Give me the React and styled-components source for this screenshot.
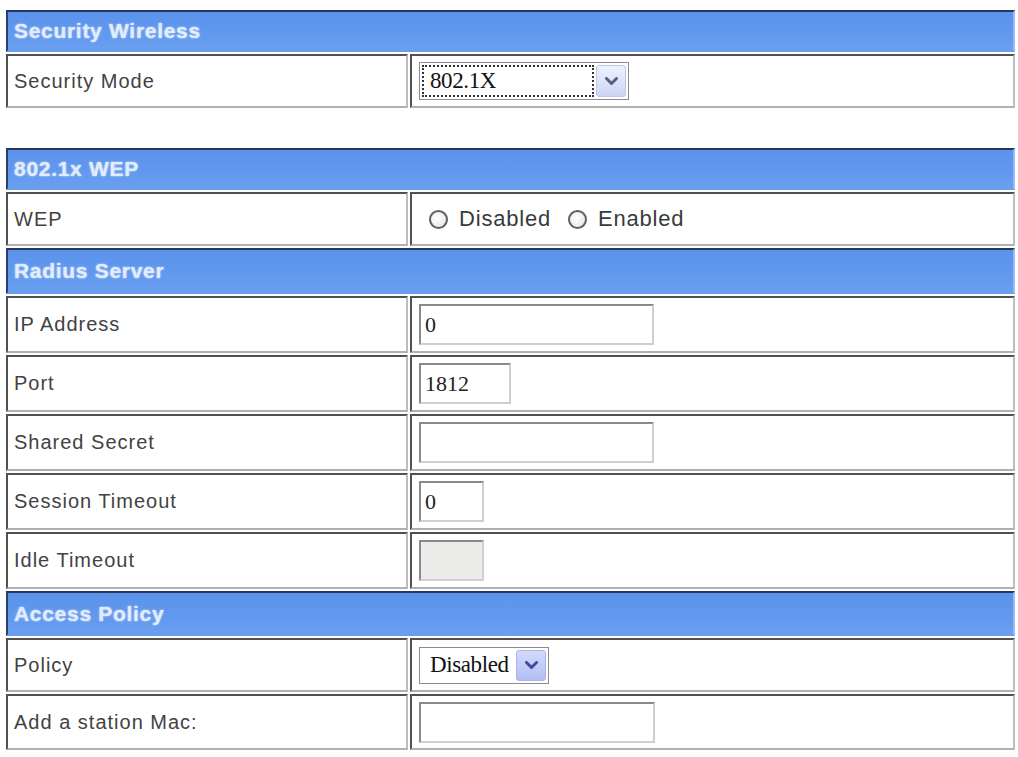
import React from 'react';
import styled, { createGlobalStyle } from 'styled-components';

const Global = createGlobalStyle`
  html, body { margin: 0; padding: 0; background: #ffffff; }
  body { font-family: "Liberation Sans", Arial, sans-serif; }
`;

const Page = styled.div`
  width: 1009px;
  padding: 10px 0 0 6px;
  display: flex;
  flex-direction: column;
  gap: 40px;
`;

const Table = styled.section`
  display: flex;
  flex-direction: column;
  gap: 2px;
`;

const Header = styled.div`
  box-sizing: border-box;
  height: ${(p) => p.$h}px;
  display: flex;
  align-items: center;
  padding-left: 6px;
  background: linear-gradient(180deg, #5b93ec 0%, #6299ee 60%, #6a9ff0 100%);
  border-style: solid;
  border-width: 2px;
  border-color: #26385e #9dbaf0 #6a9ff0 #2c3f68;
  font-family: "Liberation Sans", Arial, sans-serif;
  font-weight: bold;
  font-size: 21px;
  letter-spacing: 0.7px;
  color: #e2ecff;
  text-shadow: 0 0 2px rgba(255, 255, 255, 0.8);
`;

const Row = styled.div`
  display: grid;
  grid-template-columns: 402px 1fr;
  column-gap: 2px;
  height: ${(p) => p.$h}px;
`;

const Cell = styled.div`
  box-sizing: border-box;
  border: 2px solid;
  border-color: #505050 #bdbdbd #b0b0b0 #505050;
  background: #ffffff;
  display: flex;
  align-items: center;
`;

const LabelCell = styled(Cell)`
  padding-left: 6px;
  font-size: 20px;
  letter-spacing: 1px;
  color: #424242;
`;

const ValueCell = styled(Cell)`
  padding-left: 7px;
`;

const TextBox = styled.input`
  box-sizing: border-box;
  width: ${(p) => p.$w}px;
  height: 41px;
  margin: 0;
  padding: 0 0 0 4px;
  border: 2px solid;
  border-color: #8a8a8a #cfcfcf #cfcfcf #8a8a8a;
  outline: none;
  background: ${(p) => (p.$off ? '#ebebea' : '#ffffff')};
  font-family: "Liberation Serif", "Times New Roman", serif;
  font-size: 22px;
  color: #222222;
`;

const Select = styled.div`
  box-sizing: border-box;
  width: ${(p) => p.$w}px;
  height: ${(p) => p.$h}px;
  display: flex;
  align-items: stretch;
  gap: 2px;
  padding: 2px;
  border: 1px solid #8c8c8c;
  background: #ffffff;
`;

const SelectText = styled.div`
  box-sizing: border-box;
  flex: 1;
  display: flex;
  align-items: center;
  padding-left: ${(p) => (p.$focus ? 6 : 6)}px;
  border: 2px dotted ${(p) => (p.$focus ? '#333333' : 'transparent')};
  font-family: "Liberation Serif", "Times New Roman", serif;
  font-size: 23px;
  letter-spacing: -0.4px;
  color: #111111;
`;

const DropButton = styled.div`
  box-sizing: border-box;
  width: 30px;
  display: flex;
  align-items: center;
  justify-content: center;
  border: 1px solid ${(p) => (p.$strong ? '#a9b4ea' : '#bcc7ea')};
  border-radius: 3px;
  background: ${(p) =>
    p.$strong
      ? 'linear-gradient(180deg, #d2d9fa 0%, #b3bff4 100%)'
      : 'linear-gradient(180deg, #eef1fc 0%, #ccd5f4 100%)'};
`;

const RadioGroup = styled.div`
  display: flex;
  align-items: center;
  padding-left: 10px;
  font-size: 22px;
  letter-spacing: 0.8px;
  color: #3a3a3a;
`;

const RadioOption = styled.label`
  display: flex;
  align-items: center;
  gap: 11px;
  margin-right: 17px;
`;

const RadioDot = styled.span`
  box-sizing: border-box;
  width: 19px;
  height: 19px;
  border-radius: 50%;
  border: 2px solid #606060;
  background: radial-gradient(circle at 40% 40%, #ffffff 0%, #ececec 70%, #d6d6d6 100%);
`;

const Chevron = ({ color }) => (
  <svg width="13" height="9" viewBox="0 0 13 9">
    <polyline points="1.5,1.5 6.5,6.5 11.5,1.5" fill="none" stroke={color} strokeWidth="3" strokeLinecap="round" strokeLinejoin="round" />
  </svg>
);

export default function App() {
  return (
    <>
      <Global />
      <Page>
        <Table>
          <Header $h={42}>Security Wireless</Header>
          <Row $h={54}>
            <LabelCell>Security Mode</LabelCell>
            <ValueCell>
              <Select $w={210} $h={38}>
                <SelectText $focus>802.1X</SelectText>
                <DropButton>
                  <Chevron color="#4f6185" />
                </DropButton>
              </Select>
            </ValueCell>
          </Row>
        </Table>

        <Table>
          <Header $h={42}>802.1x WEP</Header>
          <Row $h={54}>
            <LabelCell>WEP</LabelCell>
            <ValueCell>
              <RadioGroup>
                <RadioOption>
                  <RadioDot />
                  Disabled
                </RadioOption>
                <RadioOption>
                  <RadioDot />
                  Enabled
                </RadioOption>
              </RadioGroup>
            </ValueCell>
          </Row>
          <Header $h={46}>Radius Server</Header>
          <Row $h={57}>
            <LabelCell>IP Address</LabelCell>
            <ValueCell>
              <TextBox $w={235} defaultValue="0" readOnly />
            </ValueCell>
          </Row>
          <Row $h={57}>
            <LabelCell>Port</LabelCell>
            <ValueCell>
              <TextBox $w={92} defaultValue="1812" readOnly />
            </ValueCell>
          </Row>
          <Row $h={57}>
            <LabelCell>Shared Secret</LabelCell>
            <ValueCell>
              <TextBox $w={235} defaultValue="" readOnly />
            </ValueCell>
          </Row>
          <Row $h={57}>
            <LabelCell>Session Timeout</LabelCell>
            <ValueCell>
              <TextBox $w={65} defaultValue="0" readOnly />
            </ValueCell>
          </Row>
          <Row $h={57}>
            <LabelCell>Idle Timeout</LabelCell>
            <ValueCell>
              <TextBox $w={65} $off defaultValue="" readOnly />
            </ValueCell>
          </Row>
          <Header $h={45}>Access Policy</Header>
          <Row $h={54}>
            <LabelCell>Policy</LabelCell>
            <ValueCell>
              <Select $w={130} $h={37}>
                <SelectText>Disabled</SelectText>
                <DropButton $strong>
                  <Chevron color="#3b4da0" />
                </DropButton>
              </Select>
            </ValueCell>
          </Row>
          <Row $h={56}>
            <LabelCell>Add a station Mac:</LabelCell>
            <ValueCell>
              <TextBox $w={236} defaultValue="" readOnly />
            </ValueCell>
          </Row>
        </Table>
      </Page>
    </>
  );
}
